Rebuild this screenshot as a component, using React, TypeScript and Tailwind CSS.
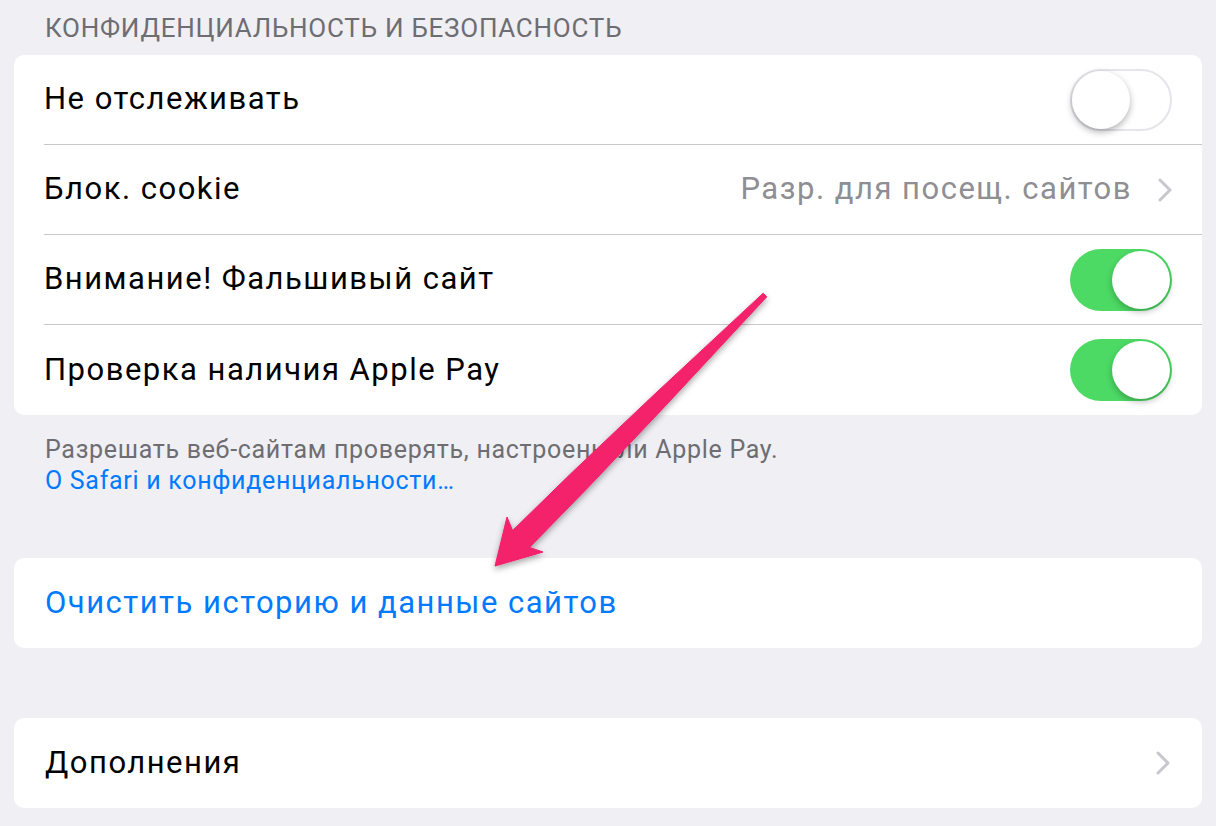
import type { ReactNode } from "react";

const font = { fontFamily: "Roboto, 'Noto Sans', sans-serif" };

function Toggle({ on }: { on: boolean }) {
  return on ? (
    <div className="flex h-[62px] w-[102px] items-center justify-end rounded-full bg-[#4cd964] p-[2px]">
      <div className="h-[58px] w-[58px] rounded-full bg-white shadow-[0_3px_6px_rgba(0,0,0,0.25)]" />
    </div>
  ) : (
    <div className="flex h-[62px] w-[102px] items-center rounded-full border-2 border-[#e5e5ea] bg-white">
      <div className="h-[58px] w-[58px] rounded-full bg-white shadow-[0_3px_7px_rgba(0,0,0,0.3)]" />
    </div>
  );
}

function Chevron() {
  return (
    <svg width="14" height="24" viewBox="0 0 14 24" fill="none">
      <path d="M2 2l10 10L2 22" stroke="#c7c7cc" strokeWidth="3" strokeLinecap="round" strokeLinejoin="round" />
    </svg>
  );
}

function Row({ children, right, last }: { children: ReactNode; right?: ReactNode; last?: boolean }) {
  return (
    <div className="flex h-[90px] pl-[30px]">
      <div
        className={`flex flex-1 items-center justify-between pr-[30px] ${last ? "" : "border-b border-[#c8c7cc]"}`}
      >
        <span className="text-[31px] tracking-[1.5px] text-black">{children}</span>
        {right}
      </div>
    </div>
  );
}

// annotation arrow drawn over the screenshot
function Arrow() {
  return (
    <svg className="pointer-events-none absolute left-0 top-0" width="1216" height="826">
      <defs>
        <filter id="sh" x="-20%" y="-20%" width="140%" height="140%">
          <feDropShadow dx="0" dy="3" stdDeviation="3" floodColor="#000" floodOpacity="0.35" />
        </filter>
      </defs>
      <polygon
        points="763.2,293.2 653.3,395.4 572,472.5 512.6,530.5 507,517 495,566 543,552 529.5,547.4 587.5,488 664.6,406.7 766.8,296.8"
        fill="#f3206a"
        stroke="#f3206a"
        strokeWidth="1"
        strokeLinejoin="round"
        filter="url(#sh)"
      />
    </svg>
  );
}

export default function App() {
  return (
    <div className="relative h-[826px] w-[1216px] overflow-hidden bg-[#efeff4]" style={font}>
      <div className="flex h-[55px] items-center pl-[45px] pt-[1px] text-[26px] tracking-[0.75px] text-[#6d6d72]">
        КОНФИДЕНЦИАЛЬНОСТЬ И БЕЗОПАСНОСТЬ
      </div>

      <div className="mx-[14px] rounded-[10px] bg-white">
        <Row right={<Toggle on={false} />}>Не отслеживать</Row>
        <Row
          right={
            <div className="flex items-center gap-[26px]">
              <span className="text-[31px] tracking-[1.5px] text-[#8e8e93]">Разр. для посещ. сайтов</span>
              <Chevron />
            </div>
          }
        >
          Блок. cookie
        </Row>
        <Row right={<Toggle on />}>Внимание! Фальшивый сайт</Row>
        <Row right={<Toggle on />} last>
          Проверка наличия Apple Pay
        </Row>
      </div>

      <div className="pl-[45px] pt-[19px] text-[25px] leading-[31px] tracking-[0.7px]">
        <p className="text-[#6d6d72]">Разрешать веб-сайтам проверять, настроены ли Apple Pay.</p>
        <p className="text-[#007aff]">O Safari и конфиденциальности…</p>
      </div>

      <div className="mx-[14px] mt-[62px] flex h-[90px] items-center rounded-[10px] bg-white pl-[31px]">
        <span className="text-[31px] tracking-[1.5px] text-[#007aff]">Очистить историю и данные сайтов</span>
      </div>

      <div className="mx-[14px] mt-[70px] flex h-[90px] items-center justify-between rounded-[10px] bg-white pl-[31px] pr-[32px]">
        <span className="text-[31px] tracking-[1.5px] text-black">Дополнения</span>
        <Chevron />
      </div>

      <Arrow />
    </div>
  );
}
